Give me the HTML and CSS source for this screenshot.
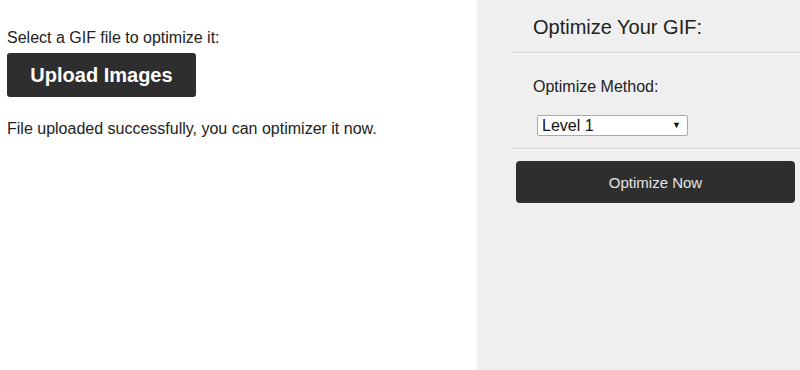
FILE: index.html
```html
<!DOCTYPE html>
<html lang="en">
<head>
    <meta charset="UTF-8">
    <meta name="viewport" content="width=device-width, initial-scale=1.0">
    <title>GIF Optimizer</title>
    <link rel="stylesheet" href="styles.css">
</head>
<body>

    <div class="wrapper">
        <div class="main">
            <p class="main__label">Select a GIF file to optimize it:</p>
            <button class="upload" type="button">Upload Images</button>
            <p class="main__status">File uploaded successfully, you can optimizer it now.</p>
        </div>
        <div class="sidebar">
            <h2 class="sidebar__title">Optimize Your GIF:</h2>
            <div class="sidebar__options">
                <p class="sidebar__label">Optimize Method:</p>
                <span class="select">
                    <select class="select__input">
                        <option>Level 1</option>
                        <option>Level 2</option>
                        <option>Level 3</option>
                    </select>
                </span>
            </div>
            <div class="sidebar__action">
                <button class="optimize" type="button">Optimize Now</button>
            </div>
        </div>
    </div>

</body>
</html>
```

FILE: styles.css
```css
* {
    box-sizing: border-box;
}

body {
    margin: 0;
    font-family: "Liberation Sans", Arial, sans-serif;
    color: #222;
    background: #fff;
}

.wrapper {
    display: flex;
    width: 100%;
    min-height: 370px;
}

.main {
    width: 477px;
    padding: 29px 0 0 7px;
}

.main__label {
    margin: 0;
    font-size: 16px;
    line-height: 18px;
}

.upload {
    display: block;
    width: 189px;
    height: 44px;
    margin-top: 6px;
    border: none;
    border-radius: 3px;
    background: #2e2e2e;
    color: #fff;
    font-family: inherit;
    font-size: 20px;
    font-weight: bold;
    cursor: pointer;
}

.main__status {
    margin: 23px 0 0;
    font-size: 16px;
    line-height: 18px;
}

.sidebar {
    flex: 1;
    background: #efefef;
    padding-left: 33px;
}

.sidebar__title {
    margin: 0;
    padding: 16px 0 14px 23px;
    font-size: 20px;
    font-weight: normal;
    line-height: 22px;
    color: #222;
    border-bottom: 1px solid #d6d6d6;
    box-shadow: 0 1px 0 #fafafa;
}

.sidebar__options {
    padding: 25px 0 0 23px;
    height: 96px;
    border-bottom: 1px solid #d6d6d6;
    box-shadow: 0 1px 0 #fafafa;
}

.sidebar__label {
    margin: 0;
    font-size: 16px;
    line-height: 18px;
}

.select {
    position: relative;
    display: block;
    width: 151px;
    margin: 19px 0 0 4px;
}

.select::after {
    content: "\25BC";
    position: absolute;
    right: 7px;
    top: 5px;
    font-size: 9px;
    color: #111;
    pointer-events: none;
}

.select__input {
    appearance: none;
    -webkit-appearance: none;
    display: block;
    width: 151px;
    height: 21px;
    padding: 0 4px;
    border: 1px solid #a9a9a9;
    border-radius: 2px;
    background: #fff;
    font-family: inherit;
    font-size: 16px;
    color: #111;
}

.sidebar__action {
    padding: 12px 5px 0 6px;
}

.optimize {
    display: block;
    width: 100%;
    height: 42px;
    border: none;
    border-radius: 4px;
    background: #2e2e2e;
    color: #e4e4e4;
    font-family: inherit;
    font-size: 15px;
    cursor: pointer;
}
```
